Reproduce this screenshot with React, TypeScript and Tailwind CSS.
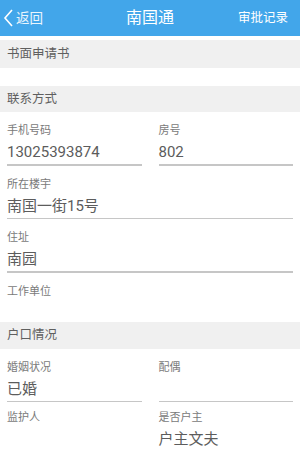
const cjk = { fontFamily: 'Roboto, "Noto Sans CJK SC", sans-serif' };

function Section({ title, className = "" }: { title: string; className?: string }) {
  return (
    <div className={`flex items-center bg-[#f0f0f0] px-[7px] text-[12.5px] text-[#5f5f5f] ${className}`}>
      {title}
    </div>
  );
}

function Field({ label, value, line = true }: { label: string; value?: string; line?: boolean }) {
  return (
    <div className="flex flex-col pt-[11px]">
      <div className="h-[16px] leading-[16px] text-[11px] text-[#7a7a7a]">{label}</div>
      <div className="h-[22px] mt-[2px] leading-[22px] text-[15px] text-[#5c5c5c]">{value}</div>
      {line && <div className="mt-[1px] h-[1.5px] bg-[#c6c6c6]" />}
    </div>
  );
}

export default function App() {
  return (
    <div className="w-[300px] h-[450px] overflow-hidden bg-white" style={cjk}>
      {/* Header */}
      <div className="relative flex h-[36px] items-center justify-between bg-[#42a6ea] text-white">
        <div className="flex items-center pl-[3px]">
          <svg width="11" height="18" viewBox="0 0 11 18" fill="none">
            <polyline points="9,1 2,9 9,17" stroke="white" strokeWidth="1.6" />
          </svg>
          <span className="ml-[2px] text-[13.5px] text-[#eaf5fd]">返回</span>
        </div>
        <div className="absolute left-0 right-0 text-center text-[16px] pointer-events-none">南国通</div>
        <div className="pr-[12px] text-[12.5px]">审批记录</div>
      </div>
      <div className="h-[4px] bg-white" />
      <Section title="书面申请书" className="h-[28px]" />
      <div className="h-[18px]" />
      <Section title="联系方式" className="h-[26px]" />
      <div className="px-[7px]">
        <div className="grid grid-cols-2 gap-x-[17px]">
          <Field label="手机号码" value="13025393874" />
          <Field label="房号" value="802" />
        </div>
        <Field label="所在楼宇" value="南国一街15号" />
        <Field label="住址" value="南园" />
        <div className="h-[49px]">
          <Field label="工作单位" line={false} />
        </div>
      </div>
      <Section title="户口情况" className="h-[27px]" />
      <div className="px-[7px]">
        <div className="grid grid-cols-2 gap-x-[17px]">
          <Field label="婚姻状况" value="已婚" />
          <Field label="配偶" />
          <div className="-mt-[3px]">
            <Field label="监护人" line={false} />
          </div>
          <div className="-mt-[3px]">
            <Field label="是否户主" value="户主文夫" line={false} />
          </div>
        </div>
      </div>
    </div>
  );
}
